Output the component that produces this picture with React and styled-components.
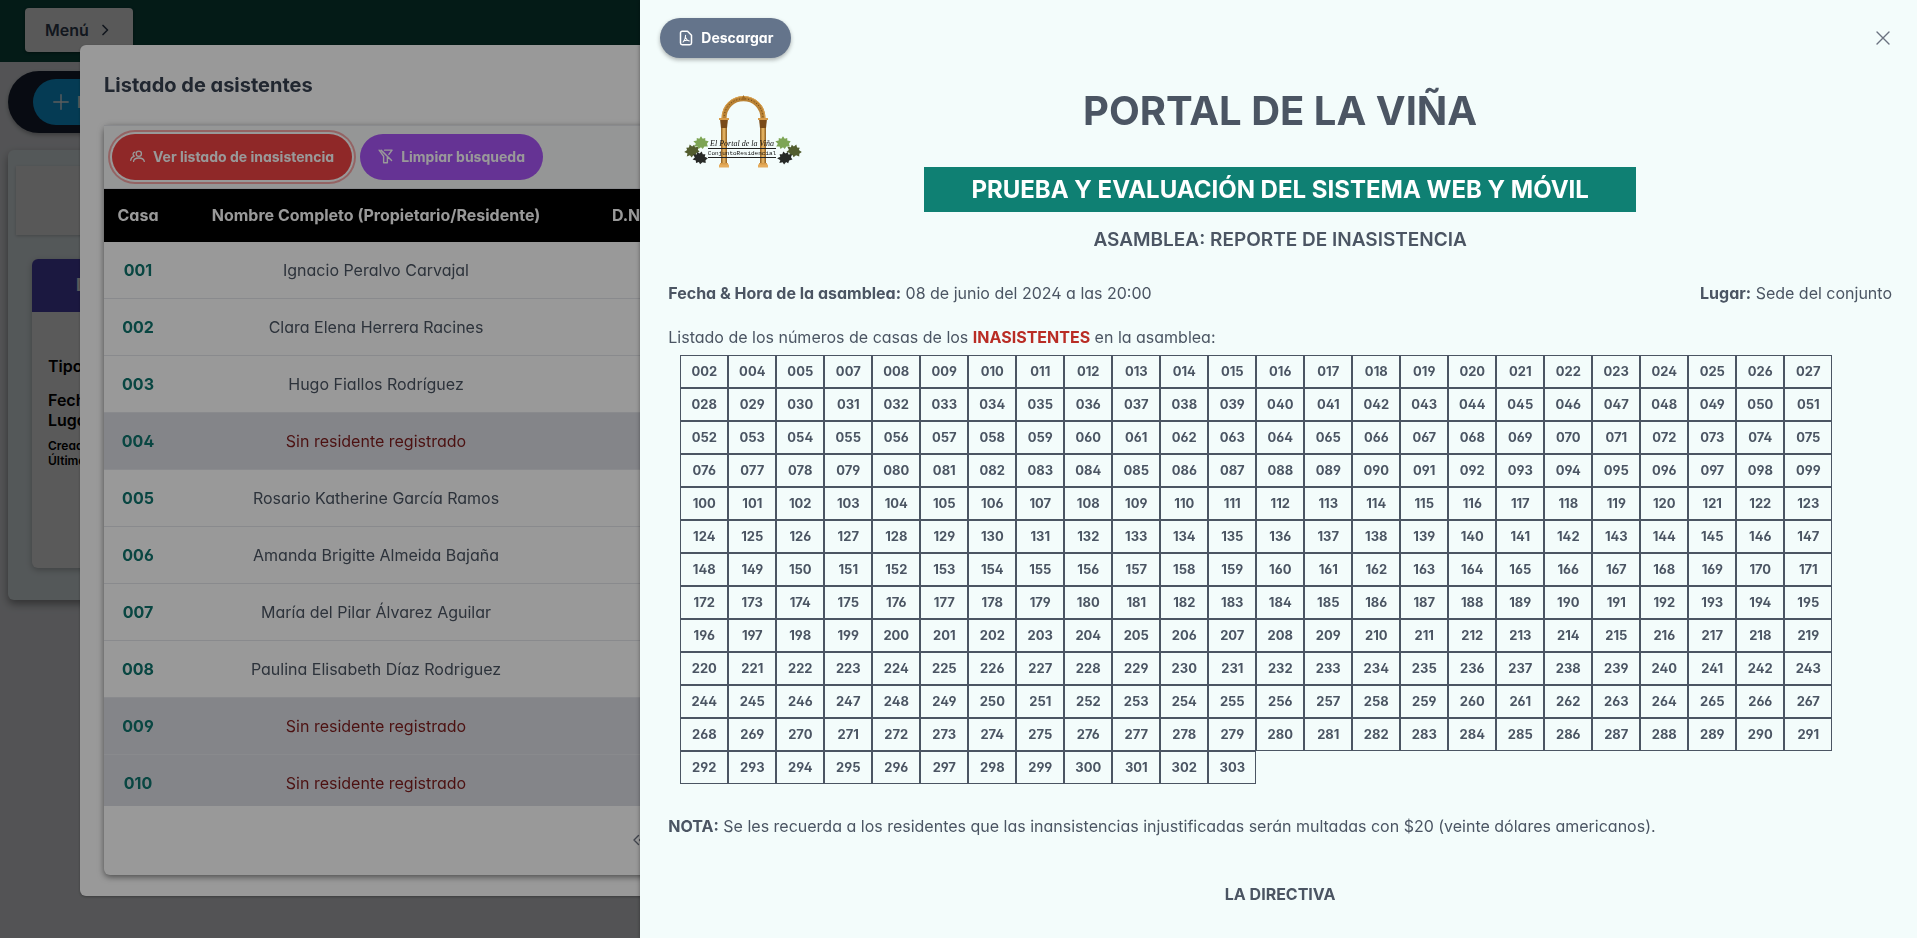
import React from "react";
import styled, { createGlobalStyle } from "styled-components";

const Global = createGlobalStyle`
  *, *::before, *::after { box-sizing: border-box; }
  body {
    margin: 0;
    background: #e5e7eb;
    color: #4b5563;
    font-family: Inter, "Liberation Sans", sans-serif;
    font-feature-settings: "cv02", "cv03", "cv04", "cv11";
    font-size: 16px;
    line-height: 24px;
  }
  h1, h2, h3, p { margin: 0; }
  button { font: inherit; font-feature-settings: inherit; border: 0; cursor: pointer; }
`;

/* ---------- page behind the dialog ---------- */

const Page = styled.div`
  min-height: 100vh;
  overflow: hidden;
`;

const NavBar = styled.header`
  background: #0c4b41;
  padding: 8px 25px 10px;
  display: flex;
`;

const MenuButton = styled.button`
  display: flex;
  align-items: center;
  gap: 8px;
  height: 44px;
  padding: 0 20px;
  border-radius: 4px;
  background: #f6f6f6;
  color: #334155;
  font-weight: 600;
  box-shadow: 0 1px 3px rgba(0, 0, 0, 0.4);
`;

const PageBody = styled.main`
  display: flex;
  flex-direction: column;
  gap: 17px;
  padding: 9px 8px 0;
`;

const ActionBar = styled.div`
  display: flex;
  padding: 8px 25px;
  border-radius: 32px;
  background: #172033;
  box-shadow: 0 2px 4px rgba(0, 0, 0, 0.3);
`;

const NewButton = styled.button`
  display: flex;
  align-items: center;
  gap: 8px;
  height: 46px;
  padding: 0 20px;
  border-radius: 32px;
  background: #0ea5e9;
  color: #ffffff;
  font-weight: 700;
`;

const Board = styled.section`
  display: flex;
  flex-direction: column;
  gap: 24px;
  padding: 16px 8px 32px;
  border-radius: 6px;
  background: #e9f3f6;
  box-shadow: 0 4px 8px rgba(0, 0, 0, 0.4);
`;

const BoardHeader = styled.div`
  height: 69px;
  background: #f3f3f3;
  box-shadow: 0 1px 3px rgba(0, 0, 0, 0.2);
`;

const EventCard = styled.article`
  width: 400px;
  margin-left: 16px;
  border-radius: 6px;
  overflow: hidden;
  background: #fafafa;
  color: #000000;
  box-shadow: 0 2px 6px rgba(0, 0, 0, 0.25);
`;

const EventTitle = styled.h2`
  padding: 14px 44px 15px;
  background: #4b43b2;
  color: #ffffff;
  font-size: 18px;
  line-height: 24px;
`;

const EventBody = styled.div`
  display: flex;
  flex-direction: column;
  gap: 8px;
  min-height: 256px;
  padding: 44px 16px 0;
  font-weight: 600;
  line-height: 20px;
`;

const EventGroup = styled.div`
  padding-bottom: ${(p) => (p.$spaced ? 6 : 0)}px;
  font-size: ${(p) => (p.$small ? 12 : 16)}px;
  line-height: ${(p) => (p.$small ? 15 : 20)}px;
`;

/* ---------- overlays ---------- */

const Mask = styled.div`
  position: fixed;
  inset: 0;
  display: flex;
  align-items: ${(p) => (p.$center ? "center" : "stretch")};
  justify-content: ${(p) => (p.$center ? "center" : "flex-end")};
  padding-top: ${(p) => (p.$center ? 2 : 0)}px;
  background: rgba(0, 0, 0, 0.4);
`;

/* ---------- attendance dialog ---------- */

const Dialog = styled.section`
  flex: 1;
  margin: 0 80px;
  padding: 0 24px 21px;
  border-radius: 6px;
  background: #ffffff;
  box-shadow: 0 1px 3px rgba(0, 0, 0, 0.3);
`;

const DialogTitle = styled.h2`
  padding: 28px 0;
  color: #374151;
  font-size: 20px;
  font-weight: 700;
  line-height: 24px;
`;

const DataPanel = styled.div`
  border-radius: 6px;
  background: #ffffff;
  box-shadow: 0 2px 6px rgba(0, 0, 0, 0.5);
`;

const PanelToolbar = styled.div`
  display: flex;
  gap: 8px;
  padding: 8px;
  border: solid #e5e7eb;
  border-width: 1px 0;
  background: #f9fafb;
`;

const PillButton = styled.button`
  display: flex;
  align-items: center;
  gap: ${(p) => (p.$compact ? 7 : 8)}px;
  height: ${(p) => (p.$compact ? 40 : 46)}px;
  padding: 0 18px;
  border-radius: 32px;
  background: ${(p) => p.$color};
  color: #ffffff;
  font-size: 14px;
  font-weight: 700;
  box-shadow: ${(p) =>
    p.$focused
      ? "0 0 0 2px #ffffff, 0 0 0 4px #f7a6a6"
      : p.$compact
        ? "0 2px 4px rgba(0, 0, 0, 0.3)"
        : "none"};
`;

const TableScroller = styled.div`
  height: 617px;
  overflow: hidden;
`;

const Table = styled.table`
  width: 100%;
  table-layout: fixed;
  border-collapse: separate;
  border-spacing: 0;
  text-align: center;
`;

const HeadCell = styled.th`
  height: 53px;
  padding: 0;
  background: #000000;
  color: #ffffff;
  font-weight: 700;
`;

const Row = styled.tr`
  background: ${(p) => (p.$vacant ? "#dcdee5" : "#ffffff")};
  color: ${(p) => (p.$vacant ? "#7f1d1d" : "#4b5563")};
`;

const Cell = styled.td`
  height: 57px;
  padding: 0;
  border-bottom: 1px solid #e5e7eb;
`;

const HouseCell = styled(Cell)`
  color: #0f766e;
  font-weight: 700;
`;

const Paginator = styled.nav`
  display: flex;
  justify-content: flex-start;
  align-items: center;
  height: 69px;
  padding-left: 521px;
  color: #6b7280;
`;

const IconButton = styled.button`
  display: flex;
  align-items: center;
  justify-content: center;
  padding: 0;
  width: 28px;
  height: 28px;
  background: transparent;
  color: #6b7280;
`;

/* ---------- report drawer ---------- */

const Drawer = styled.aside`
  width: 66.6%;
  padding: 18px 20px 0;
  overflow: hidden;
  background: #f3fcfb;
  box-shadow: 0 0 4px rgba(0, 0, 0, 0.4);
`;

const DrawerHeader = styled.div`
  display: flex;
  align-items: center;
  justify-content: space-between;
`;

const Report = styled.article`
  padding: 24px 5px 0 8px;
`;

const ReportHead = styled.header`
  display: grid;
  grid-template-columns: 150px 1fr 150px;
  align-items: start;
`;

const LogoBox = styled.div`
  padding: 12px 0 0 16px;
`;

const Titles = styled.div`
  display: flex;
  flex-direction: column;
  align-items: center;
  text-align: center;
`;

const ReportTitle = styled.h1`
  padding: 5px 0 32px;
  font-size: 40px;
  font-weight: 700;
  line-height: 48px;
`;

const Banner = styled.h2`
  padding: 8px 47px;
  background: #0f8073;
  color: #ffffff;
  font-size: 24px;
  font-weight: 700;
  line-height: 29px;
`;

const Subtitle = styled.h3`
  padding-top: 16px;
  font-size: 19px;
  font-weight: 600;
  line-height: 24px;
`;

const Facts = styled.div`
  display: flex;
  justify-content: space-between;
  padding-top: 29px;
`;

const Intro = styled.p`
  padding: 20px 0 6px;
`;

const Alert = styled.strong`
  color: #b92d25;
`;

const HouseGrid = styled.ul`
  display: flex;
  flex-wrap: wrap;
  margin: 0;
  padding: 0 48px 0 12px;
  list-style: none;
`;

const House = styled.li`
  width: 48px;
  height: 33px;
  border: 1px solid #4b5563;
  font-size: 13px;
  font-weight: 700;
  line-height: 31px;
  text-align: center;
`;

const Note = styled.p`
  padding-top: 30px;
`;

const Signature = styled.p`
  padding-top: 44px;
  font-weight: 700;
  text-align: center;
`;

/* ---------- icons ---------- */

const Stroke = ({ size = 16, width = 1.4, children, ...rest }) => (
  <svg width={size} height={size} viewBox="0 0 16 16" fill="none" stroke="currentColor"
    strokeWidth={width} strokeLinecap="round" strokeLinejoin="round" aria-hidden="true" {...rest}>
    {children}
  </svg>
);

const ChevronRight = () => (
  <Stroke width={1.7}><path d="M6 3.5 10.5 8 6 12.5" /></Stroke>
);
const PlusIcon = () => (
  <Stroke><path d="M8 .8v14.4M.8 8h14.4" /></Stroke>
);
const UsersIcon = () => (
  <Stroke size={15} width={1.4}>
    <circle cx="9.4" cy="5" r="2.8" />
    <path d="M3.800 13.200c.3-2.400 2.400-3.600 5.500-3.600s5.500 1.200 5.900 3.600" />
    <path d="M5.200 3.400a2.200 2.200 0 0 0-.6 4.200M.8 12c.2-2.100 1.200-3.300 3-3.800" />
  </Stroke>
);
const FilterSlashIcon = () => (
  <Stroke size={15} width={1.5}>
    <path d="M7 1.200h8l-3.400 4.600M1.200 1.200l4.800 6.500v7h4V8.800M3.200 1.200l11.300 11" />
  </Stroke>
);
const FilePdfIcon = () => (
  <Stroke width={1.5}>
    <path d="M9.500 1.200H4.200c-1 0-1.700.7-1.700 1.700v10.200c0 1 .7 1.700 1.700 1.700h7.600c1 0 1.700-.7 1.700-1.700V5.200z" />
    <path d="M7.600 5.300c.1 2.500-1 5-2.500 6.700M7.600 7.600c.6 1.700 1.700 2.900 3.500 3.400M6.200 10.800c1.400-.6 3-.8 4.900-.1" strokeWidth="1.1" />
  </Stroke>
);
const CloseIcon = () => (
  <Stroke width={1.4}><path d="M2 2l12 12M14 2 2 14" /></Stroke>
);
const DoubleLeftIcon = () => (
  <Stroke><path d="M7.500 3.500 3 8l4.500 4.500M13 3.500 8.500 8l4.500 4.500" /></Stroke>
);

const LEAF =
  "M0-8 2-5 5-6 5-3 9-2 7 1 8 4 4 4 2 7 0 5-3 7-4 4-8 4-6 1-9-2-5-3-5-6-2-5Z";

const leaves = [
  { x: 8, y: 57, turn: -20, fill: "#525d2e" },
  { x: 17, y: 49, turn: 0, fill: "#7da554" },
  { x: 16, y: 64, turn: 15, fill: "#272a27" },
  { x: 110, y: 57, turn: 20, fill: "#525d2e" },
  { x: 99, y: 49, turn: 0, fill: "#7da554" },
  { x: 101, y: 64, turn: -15, fill: "#272a27" },
];

const Logo = () => (
  <svg width="118" height="74" viewBox="0 0 118 74" role="img" aria-label="El Portal de la Viña">
    <defs>
      <linearGradient id="column" x1="0" x2="1">
        <stop offset="0" stopColor="#8a5a1e" />
        <stop offset="0.5" stopColor="#f0bd69" />
        <stop offset="1" stopColor="#8a5a1e" />
      </linearGradient>
    </defs>
    <path d="M40 25C40-2 79-2 79 25" fill="none" stroke="#b98235" strokeWidth="5" />
    <path d="M40 25C40-2 79-2 79 25" fill="none" stroke="#6e4717" strokeWidth="1" strokeDasharray="1 2" />
    <path d="M38 25C38-5 81-5 81 25" fill="none" stroke="#dba24e" strokeWidth="1" />
    <path d="M57 6 59.500 1 62 6Z" fill="#a06a23" />
    {[40, 79].map((x) => (
      <g key={x}>
        <rect x={x - 3} y="26" width="6" height="44" fill="url(#column)" />
        <path d={`M${x - 4} 25h8l-1 9h-6z`} fill="#7a4a18" />
        <path d={`M${x - 5} 25h10M${x - 4} 70h8`} stroke="#d79b49" strokeWidth="2" />
        <path d={`M${x - 5} 72h10`} stroke="#e5ac5c" strokeWidth="3" />
      </g>
    ))}
    {leaves.map((leaf) => (
      <path
        key={`${leaf.x}-${leaf.y}`}
        d={LEAF}
        fill={leaf.fill}
        transform={`translate(${leaf.x} ${leaf.y}) rotate(${leaf.turn}) scale(.85)`}
      />
    ))}
    <path d="M24 54.500h68M24 63.500h68" stroke="#222222" strokeWidth="1" />
    <text x="58" y="52" textAnchor="middle" fontSize="8" fontStyle="italic" fontFamily="Liberation Serif, serif" fill="#111111">
      El Portal de la Viña
    </text>
    <text x="58" y="61" textAnchor="middle" fontSize="6" fontFamily="Liberation Mono, monospace" fill="#111111">
      ConjuntoResidencial
    </text>
  </svg>
);

/* ---------- data ---------- */

const VACANT = "Sin residente registrado";

const residents = [
  ["001", "Ignacio Peralvo Carvajal"],
  ["002", "Clara Elena Herrera Racines"],
  ["003", "Hugo Fiallos Rodríguez"],
  ["004", VACANT],
  ["005", "Rosario Katherine García Ramos"],
  ["006", "Amanda Brigitte Almeida Bajaña"],
  ["007", "María del Pilar Álvarez Aguilar"],
  ["008", "Paulina Elisabeth Díaz Rodriguez"],
  ["009", VACANT],
  ["010", VACANT],
];

const attended = [1, 3, 6];
const absentHouses = Array.from({ length: 303 }, (_, i) => i + 1)
  .filter((n) => !attended.includes(n))
  .map((n) => String(n).padStart(3, "0"));

export default function App() {
  return (
    <>
      <Global />
      <Page>
        <NavBar>
          <MenuButton type="button">Menú <ChevronRight /></MenuButton>
        </NavBar>
        <PageBody>
          <ActionBar>
            <NewButton type="button"><PlusIcon /> Nueva</NewButton>
          </ActionBar>
          <Board>
            <BoardHeader />
            <EventCard>
              <EventTitle>Día</EventTitle>
              <EventBody>
                <EventGroup $spaced>Tipo:</EventGroup>
                <EventGroup>Fecha:<br />Lugar:</EventGroup>
                <EventGroup $small>Creado:<br />Última:</EventGroup>
              </EventBody>
            </EventCard>
          </Board>
        </PageBody>
      </Page>

      <Mask $center>
        <Dialog role="dialog" aria-labelledby="attendees-title">
          <DialogTitle id="attendees-title">Listado de asistentes</DialogTitle>
          <DataPanel>
            <PanelToolbar>
              <PillButton type="button" $color="#ef4444" $focused>
                <UsersIcon /> Ver listado de inasistencia
              </PillButton>
              <PillButton type="button" $color="#a855f7">
                <FilterSlashIcon /> Limpiar búsqueda
              </PillButton>
            </PanelToolbar>
            <TableScroller>
              <Table>
                <colgroup>
                  <col width="68" />
                  <col width="408" />
                  <col width="102" />
                  <col />
                </colgroup>
                <thead>
                  <tr>
                    <HeadCell scope="col">Casa</HeadCell>
                    <HeadCell scope="col">Nombre Completo (Propietario/Residente)</HeadCell>
                    <HeadCell scope="col">D.N.I</HeadCell>
                    <HeadCell />
                  </tr>
                </thead>
                <tbody>
                  {residents.map(([house, name]) => (
                    <Row key={house} $vacant={name === VACANT}>
                      <HouseCell>{house}</HouseCell>
                      <Cell>{name}</Cell>
                      <Cell />
                      <Cell />
                    </Row>
                  ))}
                </tbody>
              </Table>
            </TableScroller>
            <Paginator aria-label="Paginación">
              <IconButton type="button" aria-label="Primera página"><DoubleLeftIcon /></IconButton>
            </Paginator>
          </DataPanel>
        </Dialog>
      </Mask>

      <Mask>
        <Drawer aria-label="Reporte de inasistencia">
          <DrawerHeader>
            <PillButton type="button" $color="#64748b" $compact>
              <FilePdfIcon /> Descargar
            </PillButton>
            <IconButton type="button" aria-label="Cerrar"><CloseIcon /></IconButton>
          </DrawerHeader>
          <Report>
            <ReportHead>
              <LogoBox><Logo /></LogoBox>
              <Titles>
                <ReportTitle>PORTAL DE LA VIÑA</ReportTitle>
                <Banner>PRUEBA Y EVALUACIÓN DEL SISTEMA WEB Y MÓVIL</Banner>
                <Subtitle>ASAMBLEA: REPORTE DE INASISTENCIA</Subtitle>
              </Titles>
            </ReportHead>
            <Facts>
              <span><strong>Fecha &amp; Hora de la asamblea:</strong> 08 de junio del 2024 a las 20:00</span>
              <span><strong>Lugar:</strong> Sede del conjunto</span>
            </Facts>
            <Intro>
              Listado de los números de casas de los <Alert>INASISTENTES</Alert> en la asamblea:
            </Intro>
            <HouseGrid>
              {absentHouses.map((n) => <House key={n}>{n}</House>)}
            </HouseGrid>
            <Note>
              <strong>NOTA:</strong> Se les recuerda a los residentes que las inansistencias
              injustificadas serán multadas con $20 (veinte dólares americanos).
            </Note>
            <Signature>LA DIRECTIVA</Signature>
          </Report>
        </Drawer>
      </Mask>
    </>
  );
}
